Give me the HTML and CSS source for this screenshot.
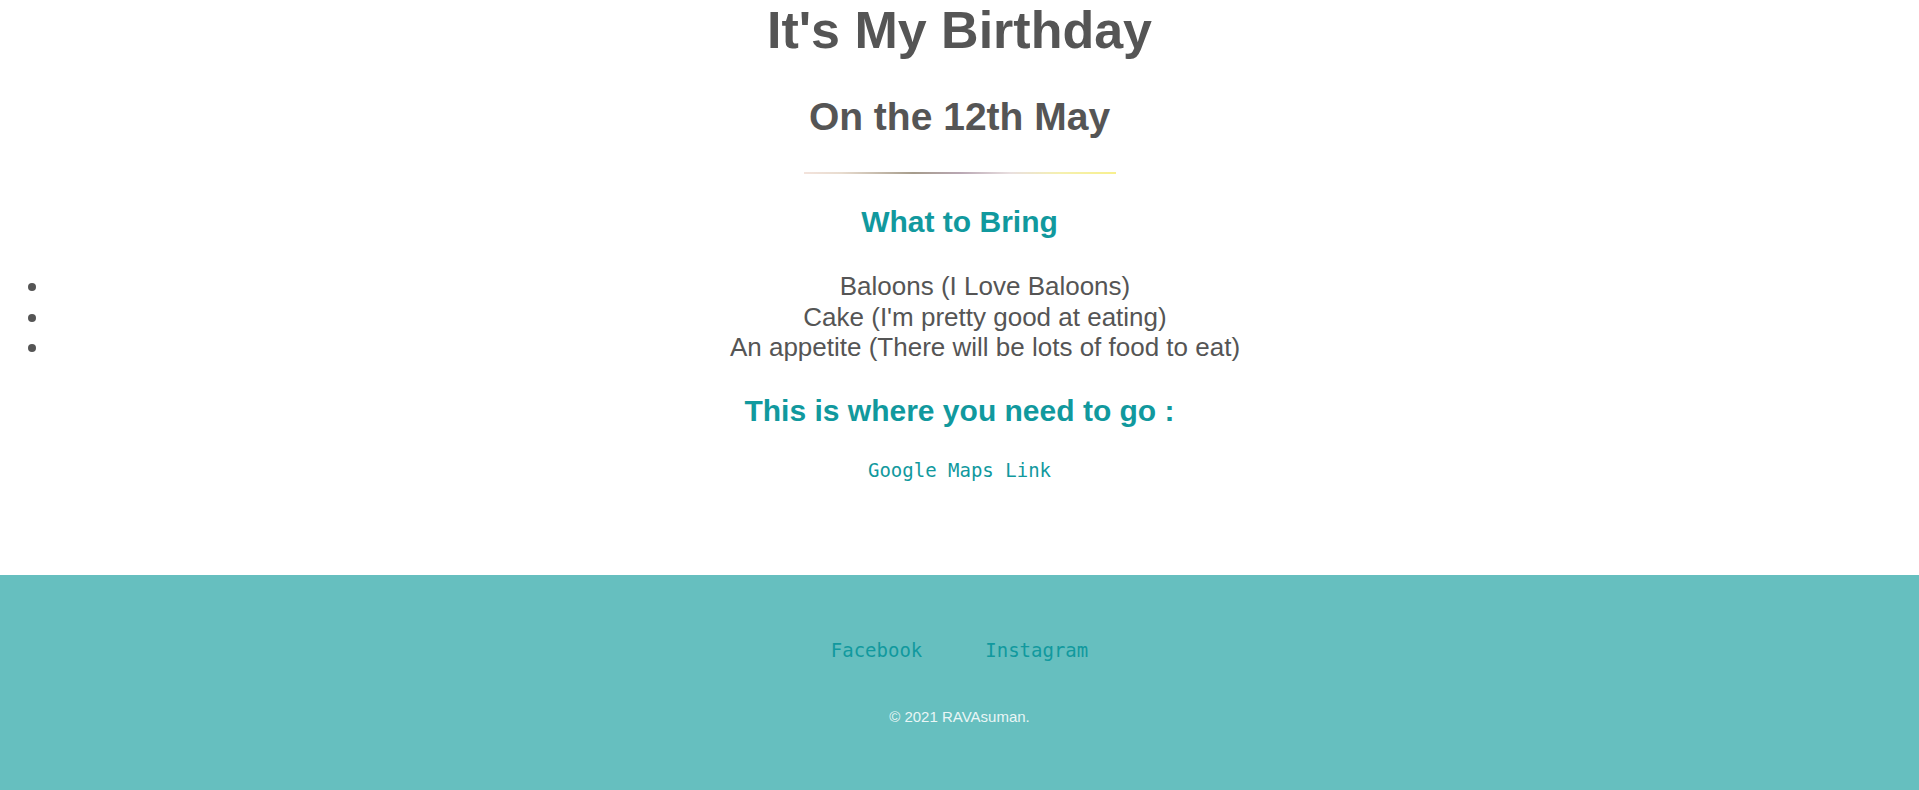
FILE: index.html
```html
<!DOCTYPE html>
<html lang="en">
<head>
<meta charset="utf-8">
<title>It's My Birthday</title>
<link rel="stylesheet" href="styles.css">
</head>
<body>
<main class="content">
  <h1 class="title">It's My Birthday</h1>
  <h2 class="subtitle">On the 12th May</h2>
  <hr class="divider">
  <h3 class="section-title section-bring">What to Bring</h3>
  <ul class="bring-list">
    <li>Baloons (I Love Baloons)</li>
    <li>Cake (I'm pretty good at eating)</li>
    <li>An appetite (There will be lots of food to eat)</li>
  </ul>
  <h3 class="section-title section-go">This is where you need to go :</h3>
  <a class="map-link" href="#">Google Maps Link</a>
</main>
<footer class="footer">
  <nav class="social">
    <a class="social-link" href="#">Facebook</a>
    <a class="social-link" href="#">Instagram</a>
  </nav>
  <p class="copyright">© 2021 RAVAsuman.</p>
</footer>
</body>
</html>
```

FILE: styles.css
```css
html, body {
  margin: 0;
  padding: 0;
}

body {
  font-family: "Liberation Sans", Arial, sans-serif;
  color: #555555;
  background: #ffffff;
}

.content {
  display: flex;
  flex-direction: column;
  align-items: center;
  text-align: center;
  padding-bottom: 94px;
}

.title {
  margin: 0;
  font-size: 52px;
  line-height: 60px;
  font-weight: bold;
  color: #555555;
}

.subtitle {
  margin: 34px 0 0;
  font-size: 39px;
  line-height: 46px;
  font-weight: bold;
  color: #555555;
}

.divider {
  margin: 32px 0 0;
  width: 312px;
  height: 2px;
  border: 0;
  background-image: linear-gradient(to right, #f3e3dc, #e8dccf 12%, #a69c8c 35%, #b9a7b3 50%, #e9dfe0 66%, #f5f0b0 82%, #f8f08e);
}

.section-title {
  font-size: 30px;
  line-height: 36px;
  font-weight: bold;
  color: #11999e;
}

.section-bring {
  margin: 30px 0 0;
}

.section-go {
  margin: 30.5px 0 0;
}

.bring-list {
  align-self: stretch;
  margin: 31px 0 0;
  padding: 0 0 0 51px;
  font-size: 26px;
  line-height: 30.5px;
  color: #555555;
}

.map-link {
  margin-top: 30px;
  font-family: "DejaVu Sans Mono", "Liberation Mono", monospace;
  font-size: 19px;
  line-height: 22px;
  color: #11999e;
  text-decoration: none;
}

.footer {
  background: #66bfbf;
  padding: 64px 0;
  text-align: center;
}

.social {
  display: flex;
  justify-content: center;
  gap: 63px;
}

.social-link {
  font-family: "DejaVu Sans Mono", "Liberation Mono", monospace;
  font-size: 19px;
  line-height: 22px;
  color: #11999e;
  text-decoration: none;
}

.copyright {
  margin: 47px 0 0;
  font-size: 15px;
  line-height: 18px;
  color: #eaf6f6;
}
```
